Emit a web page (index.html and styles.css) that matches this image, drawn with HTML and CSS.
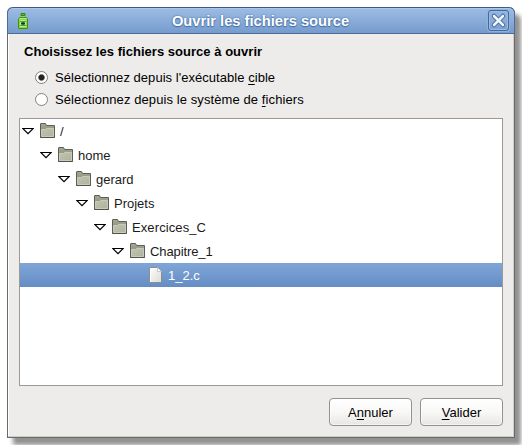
FILE: index.html
```html
<!DOCTYPE html>
<html lang="fr">
<head>
<meta charset="utf-8">
<title>Ouvrir les fichiers source</title>
<link rel="stylesheet" href="styles.css">
</head>
<body>
<svg width="0" height="0" class="defs">
  <defs>
    <linearGradient id="tab" x2="0" y2="1"><stop stop-color="#a5a893"/><stop offset="1" stop-color="#7d806c"/></linearGradient>
    <linearGradient id="front" x2="1" y2="1"><stop stop-color="#c0c3af"/><stop offset="1" stop-color="#b0b39d"/></linearGradient>
    <linearGradient id="paper" x2="1" y2="1"><stop stop-color="#fff"/><stop offset="1" stop-color="#d9dbd6"/></linearGradient>
    <symbol id="folder" viewBox="0 0 16 16">
      <path d="M.5 14.500V1Q.5.5 1 .5H5.500L6.500 2.500H14.500V14.500Z" fill="url(#tab)" stroke="#5c5e56"/>
      <path d="M1.500 13.500V6.500H5.500L6.500 5.500H13.500V13.500Z" fill="url(#front)" stroke="#c9ccbb"/>
      <path d="M.5 14.500H14.500" stroke="#50524b"/>
    </symbol>
    <symbol id="arrow" viewBox="0 0 12 7">
      <path d="M.8.5H11.200L6 5.700Z" fill="#fff" stroke="#000" stroke-width="1.150"/>
    </symbol>
  </defs>
</svg>
<main class="window">
  <header class="titlebar">
    <svg class="app-icon" viewBox="0 0 10 16">
      <path d="M3 .5H7V2.500H3Z" fill="#65bc25" stroke="#36850b"/>
      <path d="M4 3H6V5H4Z" fill="#8fdf50"/>
      <path d="M.5 15.500V5.500L2 4.500H8L9.500 5.500V15.500Z" fill="#b4f184" stroke="#3f950b"/>
      <path d="M1.500 14.500V6.500H8.500V14.500Z" fill="none" stroke="#84d83f"/>
      <path d="M5 8V13M3 10.500H7M2.500 8L7.500 13M7.500 8L2.500 13" stroke="#173b16"/>
    </svg>
    <h1>Ouvrir les fichiers source</h1>
    <button class="close" aria-label="Fermer"><svg viewBox="0 0 21 21">
      <path d="M6 6L15 15M15 6L6 15" stroke="#426b9f" stroke-width="4.500" stroke-linecap="round"/>
      <path d="M6 6L15 15M15 6L6 15" stroke="#f0f4fc" stroke-width="2.500" stroke-linecap="round"/>
    </svg></button>
  </header>
  <section class="content">
    <h2>Choisissez les fichiers source à ouvrir</h2>
    <div class="choice"><i class="radio checked"></i><span class="exec">Sélectionnez depuis l'exécutable <u>c</u>ible</span></div>
    <div class="choice"><i class="radio"></i><span class="system">Sélectionnez depuis le système de <u>f</u>ichiers</span></div>
    <div class="tree">
      <div class="row level0"><svg class="arrow"><use href="#arrow"/></svg><svg class="folder"><use href="#folder"/></svg><span>/</span></div>
      <div class="row level1"><svg class="arrow"><use href="#arrow"/></svg><svg class="folder"><use href="#folder"/></svg><span>home</span></div>
      <div class="row level2"><svg class="arrow"><use href="#arrow"/></svg><svg class="folder"><use href="#folder"/></svg><span>gerard</span></div>
      <div class="row level3"><svg class="arrow"><use href="#arrow"/></svg><svg class="folder"><use href="#folder"/></svg><span>Projets</span></div>
      <div class="row level4"><svg class="arrow"><use href="#arrow"/></svg><svg class="folder"><use href="#folder"/></svg><span class="wide">Exercices_C</span></div>
      <div class="row level5"><svg class="arrow"><use href="#arrow"/></svg><svg class="folder"><use href="#folder"/></svg><span class="narrow">Chapitre_1</span></div>
      <div class="row selected"><svg class="file" viewBox="0 0 13 16">
        <path d="M.5.5H8.500L12.500 4.500V15.500H.5Z" fill="url(#paper)" stroke="#8b8f88"/>
        <path d="M1.500 14.500V1.500H8" fill="none" stroke="#fff"/>
        <path d="M8.500.5V4.500H12.500Z" fill="#fff" stroke="#bbbdb8" stroke-width=".8"/>
      </svg><span>1_2.c</span></div>
    </div>
    <footer class="actions"><button>A<u>n</u>nuler</button><button><u>V</u>alider</button></footer>
  </section>
</main>
</body>
</html>
```
FILE: styles.css
```css
* { box-sizing: border-box; }
body {
  margin: 0;
  width: 522px;
  height: 445px;
  overflow: hidden;
  padding: 7px;
  background: #fff;
  font: 13px/16px "Liberation Sans", sans-serif;
  color: #000;
}
.defs { position: absolute; }
.window {
  width: 508px;
  height: 431px;
  border: 1px solid #6b6964;
  border-top: 0;
  border-radius: 6px 6px 0 0;
  background: #edeceb;
  box-shadow: inset -1px -1px #cfcecb, inset 1px 0 #fff, 6px 7px 4px #929292;
}
.titlebar {
  display: flex;
  align-items: center;
  height: 27px;
  margin: 0 -1px;
  padding: 0 5px 0 11px;
  border: 1px solid #4b6c97;
  border-top-color: #3f5c80;
  border-radius: 6px 6px 0 0;
  background: linear-gradient(#9dbce4, #769ccd);
  box-shadow: inset 0 1px #abc8ec;
}
.app-icon { width: 10px; height: 16px; margin-left: -1px; }
h1 {
  flex: 1;
  margin: 0;
  padding-left: 5px;
  text-align: center;
  font-size: 14.7px;
  line-height: 24px;
  color: #fff;
  text-shadow: 0 0 2px #355f98, 0 1px 1px #4773ac;
}
.close {
  width: 21px;
  height: 21px;
  padding: 0;
  border: 1px solid #40699d;
  border-radius: 3px;
  background: linear-gradient(#94b5df, #7ca1d0);
  box-shadow: 0 0 0 1px #91b2dd, inset 0 0 0 1px #9bbae2;
}
.close svg { display: block; width: 21px; height: 21px; margin: -1px; }
.content { padding: 0 11px; }
h2 {
  margin: 10px 0 7px 5px;
  font-size: 13px;
  line-height: 16px;
  letter-spacing: .03px;
}
.choice {
  display: flex;
  align-items: center;
  height: 22px;
  margin-left: 16px;
  white-space: nowrap;
}
.exec { letter-spacing: .04px; }
.system { letter-spacing: .09px; }
.radio {
  width: 13px;
  height: 13px;
  margin: 0 7px 2px 0;
  border: 1px solid #85817b;
  border-radius: 50%;
  background: #fff;
}
.radio.checked { background: radial-gradient(circle, #222 0 2.500px, #777 3px, #fff 3.700px); }
u { text-decoration-skip-ink: none; text-underline-offset: 2px; text-decoration-thickness: 1px; }
.tree {
  height: 268px;
  margin-top: 7px;
  border: 1px solid #9c9893;
  background: #fff;
  color: #1a1a1a;
}
.row { display: flex; align-items: center; height: 24px; }
.row span { padding-top: 2px; }
.wide { letter-spacing: .1px; }
.narrow { letter-spacing: -.1px; }
.arrow { width: 12px; height: 7px; margin-right: 6px; }
.folder { width: 16px; height: 16px; margin: 0 4px 0 0; }
.level0 { padding-left: 2px; }
.level1 { padding-left: 20px; }
.level2 { padding-left: 38px; }
.level3 { padding-left: 56px; }
.level4 { padding-left: 74px; }
.level5 { padding-left: 92px; }
.selected {
  padding-left: 129px;
  background: linear-gradient(#80a6d7, #648dc4);
  color: #fff;
}
.file { width: 13px; height: 16px; margin-right: 6px; }
.actions { display: flex; justify-content: flex-end; gap: 8px; margin-top: 12px; }
.actions button {
  width: 83px;
  height: 28px;
  padding: 2px 0 0;
  border: 1px solid #95918c;
  border-radius: 4px;
  background: linear-gradient(#fff, #f8f8f7 50%, #e7e6e4);
  box-shadow: inset 0 0 0 1px #ffffff80;
  font: inherit;
  color: #000;
}
```
